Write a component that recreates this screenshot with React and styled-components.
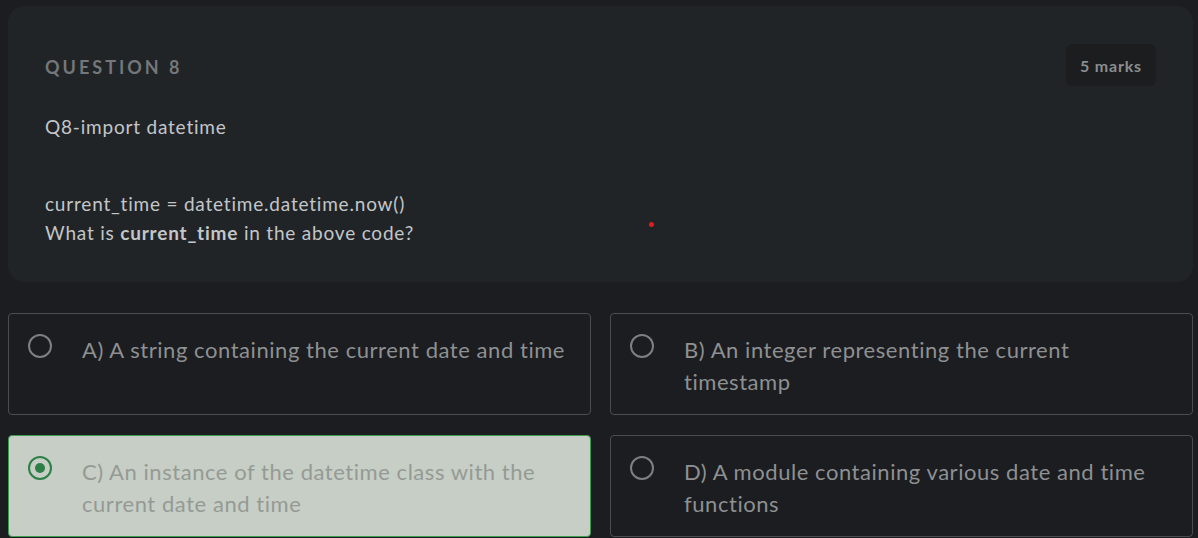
import React from "react";
import styled, { createGlobalStyle } from "styled-components";

const Global = createGlobalStyle`
  html, body { margin: 0; padding: 0; background: #1b1d20; }
  body { font-family: Lato, "Open Sans", sans-serif; }
  * { box-sizing: border-box; }
`;

const Page = styled.div`
  position: relative;
  padding: 6px 5px 0 8px;
  display: flex;
  flex-direction: column;
  gap: 31px;
  min-height: 538px;
`;

const Card = styled.section`
  background: #212427;
  border-radius: 16px;
  padding: 38px 37px 35px 37px;
`;

const Header = styled.div`
  display: flex;
  align-items: center;
  justify-content: space-between;
  height: 42px;
`;

const Title = styled.h2`
  margin: 4px 0 0 0;
  font-size: 18px;
  font-weight: 700;
  letter-spacing: 3px;
  color: #74777a;
  text-transform: uppercase;
`;

const Badge = styled.span`
  display: inline-flex;
  align-items: center;
  justify-content: center;
  width: 90px;
  height: 42px;
  border-radius: 6px;
  background: #1b1d1f;
  color: #8b8d8f;
  font-weight: 700;
  font-size: 16px;
  letter-spacing: 0.8px;
`;

const Para = styled.p`
  margin: ${(p) => p.$mt || 0}px 0 0 0;
  font-size: 19px;
  letter-spacing: 0.8px;
  line-height: 29px;
  color: #c3c6c9;
  strong { font-weight: 700; }
`;

const Options = styled.div`
  display: grid;
  grid-template-columns: 1fr 1fr;
  column-gap: 19px;
  row-gap: 20px;
`;

const Option = styled.label`
  display: flex;
  align-items: flex-start;
  gap: 30px;
  min-height: 100px;
  padding: 20px 16px 16px 19px;
  border-radius: 4px;
  border: 1px solid ${(p) => (p.$selected ? "#3c9a4e" : "#4a4c4e")};
  background: ${(p) => (p.$selected ? "#c6cec5" : "#1b1d20")};
`;

const Radio = styled.span`
  flex: 0 0 24px;
  width: 24px;
  height: 24px;
  border-radius: 50%;
  border: 2px solid ${(p) => (p.$selected ? "#2d7f47" : "#7d7f81")};
  display: flex;
  align-items: center;
  justify-content: center;
  &::after {
    content: "";
    display: ${(p) => (p.$selected ? "block" : "none")};
    width: 10px;
    height: 10px;
    border-radius: 50%;
    background: #2d7f47;
  }
`;

const OptionText = styled.span`
  font-size: 22px;
  letter-spacing: 0.55px;
  line-height: 32px;
  color: ${(p) => (p.$selected ? "#959a95" : "#8e9092")};
`;

const Dot = styled.span`
  position: absolute;
  left: 649px;
  top: 222px;
  width: 5px;
  height: 5px;
  border-radius: 50%;
  background: #e21b1b;
`;

const options = [
  { id: "A", text: "A) A string containing the current date and time" },
  { id: "B", text: "B) An integer representing the current timestamp" },
  { id: "C", text: "C) An instance of the datetime class with the current date and time", selected: true },
  { id: "D", text: "D) A module containing various date and time functions" },
];

export default function App() {
  return (
    <>
      <Global />
      <Page>
        <Card>
          <Header>
            <Title>Question 8</Title>
            <Badge>5 marks</Badge>
          </Header>
          <Para $mt={26}>Q8-import datetime</Para>
          <Para $mt={48}>
            current_time = datetime.datetime.now()
            <br />
            What is <strong>current_time</strong> in the above code?
          </Para>
        </Card>
        <Options>
          {options.map((o) => (
            <Option key={o.id} $selected={o.selected}>
              <Radio $selected={o.selected} />
              <OptionText $selected={o.selected}>{o.text}</OptionText>
            </Option>
          ))}
        </Options>
        <Dot />
      </Page>
    </>
  );
}
